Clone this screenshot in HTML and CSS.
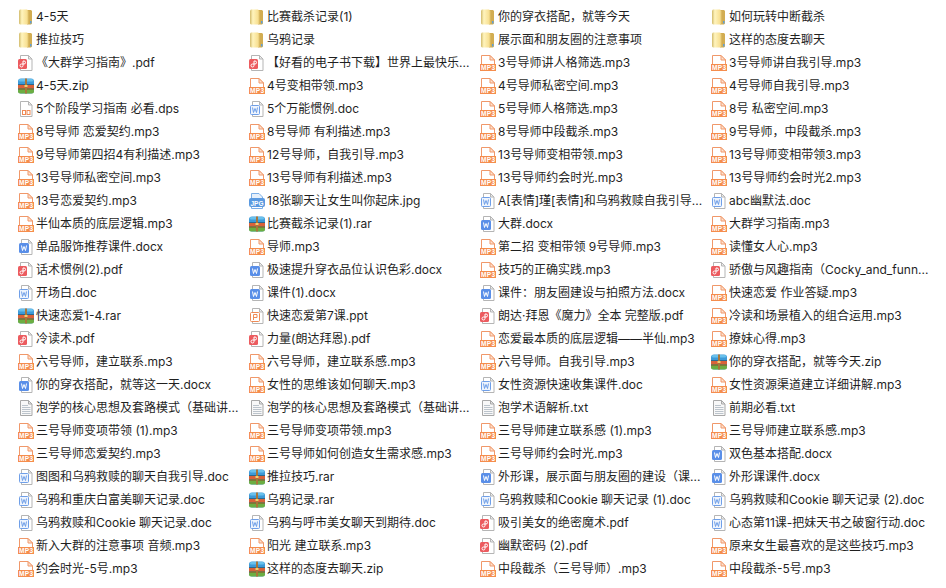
FILE: index.html
```html
<!DOCTYPE html>
<html lang="zh-CN">

<head>
    <meta charset="UTF-8">
    <title>文件列表</title>
    <link rel="stylesheet" href="styles.css">
</head>

<body>
    <!-- shared file type icons -->
    <svg class="icon-defs" width="0" height="0">
        <defs>
            <linearGradient id="folderFill" x1="0" y1="0" x2="1" y2="0">
                <stop offset="0" stop-color="#d2bb6c" />
                <stop offset="0.3" stop-color="#fff4bd" />
                <stop offset="0.8" stop-color="#f8e195" />
                <stop offset="1" stop-color="#e2c570" />
            </linearGradient>
        </defs>
        <symbol id="i-folder" viewBox="0 0 16 16">
            <path d="M9 1h4l1 1v12.500l-1 1H9z" fill="#d2ad52" />
            <path d="M2 0.500h7l1.500 1.500v12.500l-1.500 1H2l-1-1v-13z" fill="url(#folderFill)" />
            <rect x="12" y="12" width="1.500" height="2.500" fill="#5f9fd8" />
        </symbol>
        <symbol id="i-mp3" viewBox="0 0 16 16">
            <path d="M1.500 9V0.500h8.500l4.500 4.500v4" fill="#fff" stroke="#f0986a" />
            <path d="M10 0.500v4.500h4.500z" fill="#fde2cf" stroke="#f0986a" />
            <rect x="0" y="9" width="16" height="7" fill="#f58d4d" />
        </symbol>
        <symbol id="i-jpg" viewBox="0 0 16 16">
            <path d="M2.500 7V0.500h7.500l3.500 3.500v3z" fill="#e6f0fb" stroke="#7aaee6" />
            <path d="M2.500 14v1.500h11V14" fill="#fff" stroke="#7aaee6" />
            <rect x="0" y="5" width="16" height="9" rx="2" fill="#5b9ae0" />
        </symbol>
        <symbol id="i-zip" viewBox="0 0 16 16">
            <rect x="0" y="0.500" width="16" height="15" rx="3" fill="#3d9ad8" />
            <rect x="1" y="1" width="14" height="2.500" rx="1" fill="#68c0ec" />
            <rect x="0" y="6" width="16" height="4.500" fill="#d9623a" />
            <rect x="0" y="10.500" width="16" height="5" rx="2" fill="#6cae42" />
            <rect x="0" y="6" width="16" height="1" fill="#2a6a90" />
            <rect x="0" y="10.500" width="16" height="1" fill="#8a4a24" />
            <rect x="7" y="0.500" width="2" height="15" fill="#a9763a" />
            <rect x="6.500" y="7" width="3" height="2" fill="#f0d070" />
        </symbol>
        <symbol id="i-pdf" viewBox="0 0 16 16">
            <path d="M2.500 5V0.500h8l3.500 3.500v11.500H2.500V13" fill="#fff" stroke="#b5b5b5" />
            <path d="M10.500 0.500v3.500h3.500z" fill="#eee" stroke="#b5b5b5" />
            <rect x="0" y="4" width="9" height="10" rx="1.500" fill="#ec5b5f" />
            <path d="M5 6v4.500a1.500 1.500 0 1 1-1.500-1.500h2.500a1 1 0 0 0 0-3z" fill="none" stroke="#fff" />
        </symbol>
        <symbol id="i-doc" viewBox="0 0 16 16">
            <path d="M3.500 5V0.500h7l3.500 3.500v11.500H3.500V13" fill="#fff" stroke="#b5b5b5" />
            <path d="M10.500 0.500v3.500h3.500z" fill="#eee" stroke="#b5b5b5" />
            <rect x="1.500" y="4.500" width="9" height="9" rx="1" fill="#eef4fd" stroke="#6f9fe8" />
            <path d="M3.500 6.500l1 5 1.500-4 1.500 4 1-5" fill="none" stroke="#6f9fe8" />
        </symbol>
        <symbol id="i-docx" viewBox="0 0 16 16">
            <path d="M3.500 5V0.500h7l3.500 3.500v11.500H3.500V13" fill="#fff" stroke="#b5b5b5" />
            <path d="M10.500 0.500v3.500h3.500z" fill="#eee" stroke="#b5b5b5" />
            <rect x="1" y="4" width="10" height="10" rx="1.500" fill="#5a8fe8" />
            <path d="M3.500 6.500l1 5 1.500-4 1.500 4 1-5" fill="none" stroke="#fff" />
        </symbol>
        <symbol id="i-ppt" viewBox="0 0 16 16">
            <path d="M3.500 5V0.500h7l3.500 3.500v11.500H3.500V13" fill="#fff" stroke="#b5b5b5" />
            <path d="M10.500 0.500v3.500h3.500z" fill="#eee" stroke="#b5b5b5" />
            <rect x="1.500" y="4.500" width="9" height="9" rx="1" fill="#fff" stroke="#ef8a55" />
            <path d="M4.500 12V6.500h3.500v3H4.500" fill="none" stroke="#ef8a55" />
        </symbol>
        <symbol id="i-dps" viewBox="0 0 16 16">
            <path d="M2.500 0.500h8l3.500 3.500v11.500H2.500z" fill="#fff" stroke="#b5b5b5" />
            <path d="M10.500 0.500v3.500h3.500z" fill="#eee" stroke="#b5b5b5" />
            <rect x="4.500" y="9.500" width="3" height="4" fill="none" stroke="#ef8a55" />
            <rect x="9" y="9.500" width="3" height="4" fill="none" stroke="#ef8a55" />
        </symbol>
        <symbol id="i-txt" viewBox="0 0 16 16">
            <path d="M2.500 0.500h8l3.500 3.500v11.500H2.500z" fill="#f8f8f8" stroke="#a8a8a8" />
            <path d="M10.500 0.500v3.500h3.500z" fill="#e4e4e4" stroke="#a8a8a8" />
            <path d="M4 5.500h6M4 7.500h8.500M4 9.500h8.500M4 11.500h8.500M4 13.500h8.500" stroke="#bcc4cc" />
        </symbol>
    </svg>

    <div class="file-grid">
        <div class="file-item"><svg class="file-icon"><use href="#i-folder" /></svg><span class="file-name">4-5天</span></div>
        <div class="file-item"><svg class="file-icon"><use href="#i-folder" /></svg><span class="file-name">比赛截杀记录(1)</span></div>
        <div class="file-item"><svg class="file-icon"><use href="#i-folder" /></svg><span class="file-name">你的穿衣搭配，就等今天</span></div>
        <div class="file-item"><svg class="file-icon"><use href="#i-folder" /></svg><span class="file-name">如何玩转中断截杀</span></div>

        <div class="file-item"><svg class="file-icon"><use href="#i-folder" /></svg><span class="file-name">推拉技巧</span></div>
        <div class="file-item"><svg class="file-icon"><use href="#i-folder" /></svg><span class="file-name">乌鸦记录</span></div>
        <div class="file-item"><svg class="file-icon"><use href="#i-folder" /></svg><span class="file-name">展示面和朋友圈的注意事项</span></div>
        <div class="file-item"><svg class="file-icon"><use href="#i-folder" /></svg><span class="file-name">这样的态度去聊天</span></div>

        <div class="file-item"><svg class="file-icon"><use href="#i-pdf" /></svg><span class="file-name">《大群学习指南》.pdf</span></div>
        <div class="file-item"><svg class="file-icon"><use href="#i-pdf" /></svg><span class="file-name">【好看的电子书下载】世界上最快乐...</span></div>
        <div class="file-item"><svg class="file-icon"><use href="#i-mp3" /><text x="8" y="15" class="icon-label" textLength="14">MP3</text></svg><span class="file-name">3号导师讲人格筛选.mp3</span></div>
        <div class="file-item"><svg class="file-icon"><use href="#i-mp3" /><text x="8" y="15" class="icon-label" textLength="14">MP3</text></svg><span class="file-name">3号导师讲自我引导.mp3</span></div>

        <div class="file-item"><svg class="file-icon"><use href="#i-zip" /></svg><span class="file-name">4-5天.zip</span></div>
        <div class="file-item"><svg class="file-icon"><use href="#i-mp3" /><text x="8" y="15" class="icon-label" textLength="14">MP3</text></svg><span class="file-name">4号变相带领.mp3</span></div>
        <div class="file-item"><svg class="file-icon"><use href="#i-mp3" /><text x="8" y="15" class="icon-label" textLength="14">MP3</text></svg><span class="file-name">4号导师私密空间.mp3</span></div>
        <div class="file-item"><svg class="file-icon"><use href="#i-mp3" /><text x="8" y="15" class="icon-label" textLength="14">MP3</text></svg><span class="file-name">4号导师自我引导.mp3</span></div>

        <div class="file-item"><svg class="file-icon"><use href="#i-dps" /></svg><span class="file-name">5个阶段学习指南 必看.dps</span></div>
        <div class="file-item"><svg class="file-icon"><use href="#i-doc" /></svg><span class="file-name">5个万能惯例.doc</span></div>
        <div class="file-item"><svg class="file-icon"><use href="#i-mp3" /><text x="8" y="15" class="icon-label" textLength="14">MP3</text></svg><span class="file-name">5号导师人格筛选.mp3</span></div>
        <div class="file-item"><svg class="file-icon"><use href="#i-mp3" /><text x="8" y="15" class="icon-label" textLength="14">MP3</text></svg><span class="file-name">8号 私密空间.mp3</span></div>

        <div class="file-item"><svg class="file-icon"><use href="#i-mp3" /><text x="8" y="15" class="icon-label" textLength="14">MP3</text></svg><span class="file-name">8号导师 恋爱契约.mp3</span></div>
        <div class="file-item"><svg class="file-icon"><use href="#i-mp3" /><text x="8" y="15" class="icon-label" textLength="14">MP3</text></svg><span class="file-name">8号导师 有利描述.mp3</span></div>
        <div class="file-item"><svg class="file-icon"><use href="#i-mp3" /><text x="8" y="15" class="icon-label" textLength="14">MP3</text></svg><span class="file-name">8号导师中段截杀.mp3</span></div>
        <div class="file-item"><svg class="file-icon"><use href="#i-mp3" /><text x="8" y="15" class="icon-label" textLength="14">MP3</text></svg><span class="file-name">9号导师，中段截杀.mp3</span></div>

        <div class="file-item"><svg class="file-icon"><use href="#i-mp3" /><text x="8" y="15" class="icon-label" textLength="14">MP3</text></svg><span class="file-name">9号导师第四招4有利描述.mp3</span></div>
        <div class="file-item"><svg class="file-icon"><use href="#i-mp3" /><text x="8" y="15" class="icon-label" textLength="14">MP3</text></svg><span class="file-name">12号导师，自我引导.mp3</span></div>
        <div class="file-item"><svg class="file-icon"><use href="#i-mp3" /><text x="8" y="15" class="icon-label" textLength="14">MP3</text></svg><span class="file-name">13号导师变相带领.mp3</span></div>
        <div class="file-item"><svg class="file-icon"><use href="#i-mp3" /><text x="8" y="15" class="icon-label" textLength="14">MP3</text></svg><span class="file-name">13号导师变相带领3.mp3</span></div>

        <div class="file-item"><svg class="file-icon"><use href="#i-mp3" /><text x="8" y="15" class="icon-label" textLength="14">MP3</text></svg><span class="file-name">13号导师私密空间.mp3</span></div>
        <div class="file-item"><svg class="file-icon"><use href="#i-mp3" /><text x="8" y="15" class="icon-label" textLength="14">MP3</text></svg><span class="file-name">13号导师有利描述.mp3</span></div>
        <div class="file-item"><svg class="file-icon"><use href="#i-mp3" /><text x="8" y="15" class="icon-label" textLength="14">MP3</text></svg><span class="file-name">13号导师约会时光.mp3</span></div>
        <div class="file-item"><svg class="file-icon"><use href="#i-mp3" /><text x="8" y="15" class="icon-label" textLength="14">MP3</text></svg><span class="file-name">13号导师约会时光2.mp3</span></div>

        <div class="file-item"><svg class="file-icon"><use href="#i-mp3" /><text x="8" y="15" class="icon-label" textLength="14">MP3</text></svg><span class="file-name">13号恋爱契约.mp3</span></div>
        <div class="file-item"><svg class="file-icon"><use href="#i-jpg" /><text x="8" y="12.500" class="icon-label" textLength="13">JPG</text></svg><span class="file-name">18张聊天让女生叫你起床.jpg</span></div>
        <div class="file-item"><svg class="file-icon"><use href="#i-doc" /></svg><span class="file-name">A[表情]瑾[表情]和乌鸦救赎自我引导...</span></div>
        <div class="file-item"><svg class="file-icon"><use href="#i-doc" /></svg><span class="file-name">abc幽默法.doc</span></div>

        <div class="file-item"><svg class="file-icon"><use href="#i-mp3" /><text x="8" y="15" class="icon-label" textLength="14">MP3</text></svg><span class="file-name">半仙本质的底层逻辑.mp3</span></div>
        <div class="file-item"><svg class="file-icon"><use href="#i-zip" /></svg><span class="file-name">比赛截杀记录(1).rar</span></div>
        <div class="file-item"><svg class="file-icon"><use href="#i-docx" /></svg><span class="file-name">大群.docx</span></div>
        <div class="file-item"><svg class="file-icon"><use href="#i-mp3" /><text x="8" y="15" class="icon-label" textLength="14">MP3</text></svg><span class="file-name">大群学习指南.mp3</span></div>

        <div class="file-item"><svg class="file-icon"><use href="#i-docx" /></svg><span class="file-name">单品服饰推荐课件.docx</span></div>
        <div class="file-item"><svg class="file-icon"><use href="#i-mp3" /><text x="8" y="15" class="icon-label" textLength="14">MP3</text></svg><span class="file-name">导师.mp3</span></div>
        <div class="file-item"><svg class="file-icon"><use href="#i-mp3" /><text x="8" y="15" class="icon-label" textLength="14">MP3</text></svg><span class="file-name">第二招 变相带领 9号导师.mp3</span></div>
        <div class="file-item"><svg class="file-icon"><use href="#i-mp3" /><text x="8" y="15" class="icon-label" textLength="14">MP3</text></svg><span class="file-name">读懂女人心.mp3</span></div>

        <div class="file-item"><svg class="file-icon"><use href="#i-pdf" /></svg><span class="file-name">话术惯例(2).pdf</span></div>
        <div class="file-item"><svg class="file-icon"><use href="#i-docx" /></svg><span class="file-name">极速提升穿衣品位认识色彩.docx</span></div>
        <div class="file-item"><svg class="file-icon"><use href="#i-mp3" /><text x="8" y="15" class="icon-label" textLength="14">MP3</text></svg><span class="file-name">技巧的正确实践.mp3</span></div>
        <div class="file-item"><svg class="file-icon"><use href="#i-pdf" /></svg><span class="file-name">骄傲与风趣指南（Cocky_and_funn...</span></div>

        <div class="file-item"><svg class="file-icon"><use href="#i-doc" /></svg><span class="file-name">开场白.doc</span></div>
        <div class="file-item"><svg class="file-icon"><use href="#i-docx" /></svg><span class="file-name">课件(1).docx</span></div>
        <div class="file-item"><svg class="file-icon"><use href="#i-docx" /></svg><span class="file-name">课件：朋友圈建设与拍照方法.docx</span></div>
        <div class="file-item"><svg class="file-icon"><use href="#i-mp3" /><text x="8" y="15" class="icon-label" textLength="14">MP3</text></svg><span class="file-name">快速恋爱 作业答疑.mp3</span></div>

        <div class="file-item"><svg class="file-icon"><use href="#i-zip" /></svg><span class="file-name">快速恋爱1-4.rar</span></div>
        <div class="file-item"><svg class="file-icon"><use href="#i-ppt" /></svg><span class="file-name">快速恋爱第7课.ppt</span></div>
        <div class="file-item"><svg class="file-icon"><use href="#i-pdf" /></svg><span class="file-name">朗达·拜恩《魔力》全本 完整版.pdf</span></div>
        <div class="file-item"><svg class="file-icon"><use href="#i-mp3" /><text x="8" y="15" class="icon-label" textLength="14">MP3</text></svg><span class="file-name">冷读和场景植入的组合运用.mp3</span></div>

        <div class="file-item"><svg class="file-icon"><use href="#i-pdf" /></svg><span class="file-name">冷读术.pdf</span></div>
        <div class="file-item"><svg class="file-icon"><use href="#i-pdf" /></svg><span class="file-name">力量(朗达拜恩).pdf</span></div>
        <div class="file-item"><svg class="file-icon"><use href="#i-mp3" /><text x="8" y="15" class="icon-label" textLength="14">MP3</text></svg><span class="file-name">恋爱最本质的底层逻辑——半仙.mp3</span></div>
        <div class="file-item"><svg class="file-icon"><use href="#i-mp3" /><text x="8" y="15" class="icon-label" textLength="14">MP3</text></svg><span class="file-name">撩妹心得.mp3</span></div>

        <div class="file-item"><svg class="file-icon"><use href="#i-mp3" /><text x="8" y="15" class="icon-label" textLength="14">MP3</text></svg><span class="file-name">六号导师，建立联系.mp3</span></div>
        <div class="file-item"><svg class="file-icon"><use href="#i-mp3" /><text x="8" y="15" class="icon-label" textLength="14">MP3</text></svg><span class="file-name">六号导师，建立联系感.mp3</span></div>
        <div class="file-item"><svg class="file-icon"><use href="#i-mp3" /><text x="8" y="15" class="icon-label" textLength="14">MP3</text></svg><span class="file-name">六号导师。自我引导.mp3</span></div>
        <div class="file-item"><svg class="file-icon"><use href="#i-zip" /></svg><span class="file-name">你的穿衣搭配，就等今天.zip</span></div>

        <div class="file-item"><svg class="file-icon"><use href="#i-docx" /></svg><span class="file-name">你的穿衣搭配，就等这一天.docx</span></div>
        <div class="file-item"><svg class="file-icon"><use href="#i-mp3" /><text x="8" y="15" class="icon-label" textLength="14">MP3</text></svg><span class="file-name">女性的思维该如何聊天.mp3</span></div>
        <div class="file-item"><svg class="file-icon"><use href="#i-doc" /></svg><span class="file-name">女性资源快速收集课件.doc</span></div>
        <div class="file-item"><svg class="file-icon"><use href="#i-mp3" /><text x="8" y="15" class="icon-label" textLength="14">MP3</text></svg><span class="file-name">女性资源渠道建立详细讲解.mp3</span></div>

        <div class="file-item"><svg class="file-icon"><use href="#i-txt" /></svg><span class="file-name">泡学的核心思想及套路模式（基础讲...</span></div>
        <div class="file-item"><svg class="file-icon"><use href="#i-txt" /></svg><span class="file-name">泡学的核心思想及套路模式（基础讲...</span></div>
        <div class="file-item"><svg class="file-icon"><use href="#i-txt" /></svg><span class="file-name">泡学术语解析.txt</span></div>
        <div class="file-item"><svg class="file-icon"><use href="#i-txt" /></svg><span class="file-name">前期必看.txt</span></div>

        <div class="file-item"><svg class="file-icon"><use href="#i-mp3" /><text x="8" y="15" class="icon-label" textLength="14">MP3</text></svg><span class="file-name">三号导师变项带领 (1).mp3</span></div>
        <div class="file-item"><svg class="file-icon"><use href="#i-mp3" /><text x="8" y="15" class="icon-label" textLength="14">MP3</text></svg><span class="file-name">三号导师变项带领.mp3</span></div>
        <div class="file-item"><svg class="file-icon"><use href="#i-mp3" /><text x="8" y="15" class="icon-label" textLength="14">MP3</text></svg><span class="file-name">三号导师建立联系感 (1).mp3</span></div>
        <div class="file-item"><svg class="file-icon"><use href="#i-mp3" /><text x="8" y="15" class="icon-label" textLength="14">MP3</text></svg><span class="file-name">三号导师建立联系感.mp3</span></div>

        <div class="file-item"><svg class="file-icon"><use href="#i-mp3" /><text x="8" y="15" class="icon-label" textLength="14">MP3</text></svg><span class="file-name">三号导师恋爱契约.mp3</span></div>
        <div class="file-item"><svg class="file-icon"><use href="#i-mp3" /><text x="8" y="15" class="icon-label" textLength="14">MP3</text></svg><span class="file-name">三号导师如何创造女生需求感.mp3</span></div>
        <div class="file-item"><svg class="file-icon"><use href="#i-mp3" /><text x="8" y="15" class="icon-label" textLength="14">MP3</text></svg><span class="file-name">三号导师约会时光.mp3</span></div>
        <div class="file-item"><svg class="file-icon"><use href="#i-docx" /></svg><span class="file-name">双色基本搭配.docx</span></div>

        <div class="file-item"><svg class="file-icon"><use href="#i-doc" /></svg><span class="file-name">图图和乌鸦救赎的聊天自我引导.doc</span></div>
        <div class="file-item"><svg class="file-icon"><use href="#i-zip" /></svg><span class="file-name">推拉技巧.rar</span></div>
        <div class="file-item"><svg class="file-icon"><use href="#i-docx" /></svg><span class="file-name">外形课，展示面与朋友圈的建设（课...</span></div>
        <div class="file-item"><svg class="file-icon"><use href="#i-docx" /></svg><span class="file-name">外形课课件.docx</span></div>

        <div class="file-item"><svg class="file-icon"><use href="#i-doc" /></svg><span class="file-name">乌鸦和重庆白富美聊天记录.doc</span></div>
        <div class="file-item"><svg class="file-icon"><use href="#i-zip" /></svg><span class="file-name">乌鸦记录.rar</span></div>
        <div class="file-item"><svg class="file-icon"><use href="#i-doc" /></svg><span class="file-name">乌鸦救赎和Cookie 聊天记录 (1).doc</span></div>
        <div class="file-item"><svg class="file-icon"><use href="#i-doc" /></svg><span class="file-name">乌鸦救赎和Cookie 聊天记录 (2).doc</span></div>

        <div class="file-item"><svg class="file-icon"><use href="#i-doc" /></svg><span class="file-name">乌鸦救赎和Cookie 聊天记录.doc</span></div>
        <div class="file-item"><svg class="file-icon"><use href="#i-doc" /></svg><span class="file-name">乌鸦与呼市美女聊天到期待.doc</span></div>
        <div class="file-item"><svg class="file-icon"><use href="#i-pdf" /></svg><span class="file-name">吸引美女的绝密魔术.pdf</span></div>
        <div class="file-item"><svg class="file-icon"><use href="#i-doc" /></svg><span class="file-name">心态第11课-把妹天书之破窗行动.doc</span></div>

        <div class="file-item"><svg class="file-icon"><use href="#i-mp3" /><text x="8" y="15" class="icon-label" textLength="14">MP3</text></svg><span class="file-name">新入大群的注意事项 音频.mp3</span></div>
        <div class="file-item"><svg class="file-icon"><use href="#i-mp3" /><text x="8" y="15" class="icon-label" textLength="14">MP3</text></svg><span class="file-name">阳光 建立联系.mp3</span></div>
        <div class="file-item"><svg class="file-icon"><use href="#i-pdf" /></svg><span class="file-name">幽默密码 (2).pdf</span></div>
        <div class="file-item"><svg class="file-icon"><use href="#i-mp3" /><text x="8" y="15" class="icon-label" textLength="14">MP3</text></svg><span class="file-name">原来女生最喜欢的是这些技巧.mp3</span></div>

        <div class="file-item"><svg class="file-icon"><use href="#i-mp3" /><text x="8" y="15" class="icon-label" textLength="14">MP3</text></svg><span class="file-name">约会时光-5号.mp3</span></div>
        <div class="file-item"><svg class="file-icon"><use href="#i-zip" /></svg><span class="file-name">这样的态度去聊天.zip</span></div>
        <div class="file-item"><svg class="file-icon"><use href="#i-mp3" /><text x="8" y="15" class="icon-label" textLength="14">MP3</text></svg><span class="file-name">中段截杀（三号导师）.mp3</span></div>
        <div class="file-item"><svg class="file-icon"><use href="#i-mp3" /><text x="8" y="15" class="icon-label" textLength="14">MP3</text></svg><span class="file-name">中段截杀-5号.mp3</span></div>
    </div>
</body>

</html>
```

FILE: styles.css
```css
body {
    margin: 0;
    background-color: #fff;
    overflow: hidden;
}

.icon-defs {
    display: block;
}

.icon-label {
    font-family: "Liberation Sans", sans-serif;
    font-size: 6.5px;
    font-weight: 700;
    fill: #fff;
    text-anchor: middle;
}

.file-grid {
    display: grid;
    grid-template-columns: repeat(4, 231px);
    grid-auto-rows: 23px;
    padding-top: 5px;
    padding-left: 18px;
}

.file-item {
    display: flex;
    align-items: center;
    gap: 2px;
    white-space: nowrap;
}

.file-icon {
    width: 16px;
    height: 16px;
    flex-shrink: 0;
}

/* text sits 1px above the icon centre */
.file-name {
    margin-bottom: 2px;
    font-family: "Inter", "Noto Sans CJK SC", sans-serif;
    font-size: 12px;
    color: #1f1f1f;
}
```
